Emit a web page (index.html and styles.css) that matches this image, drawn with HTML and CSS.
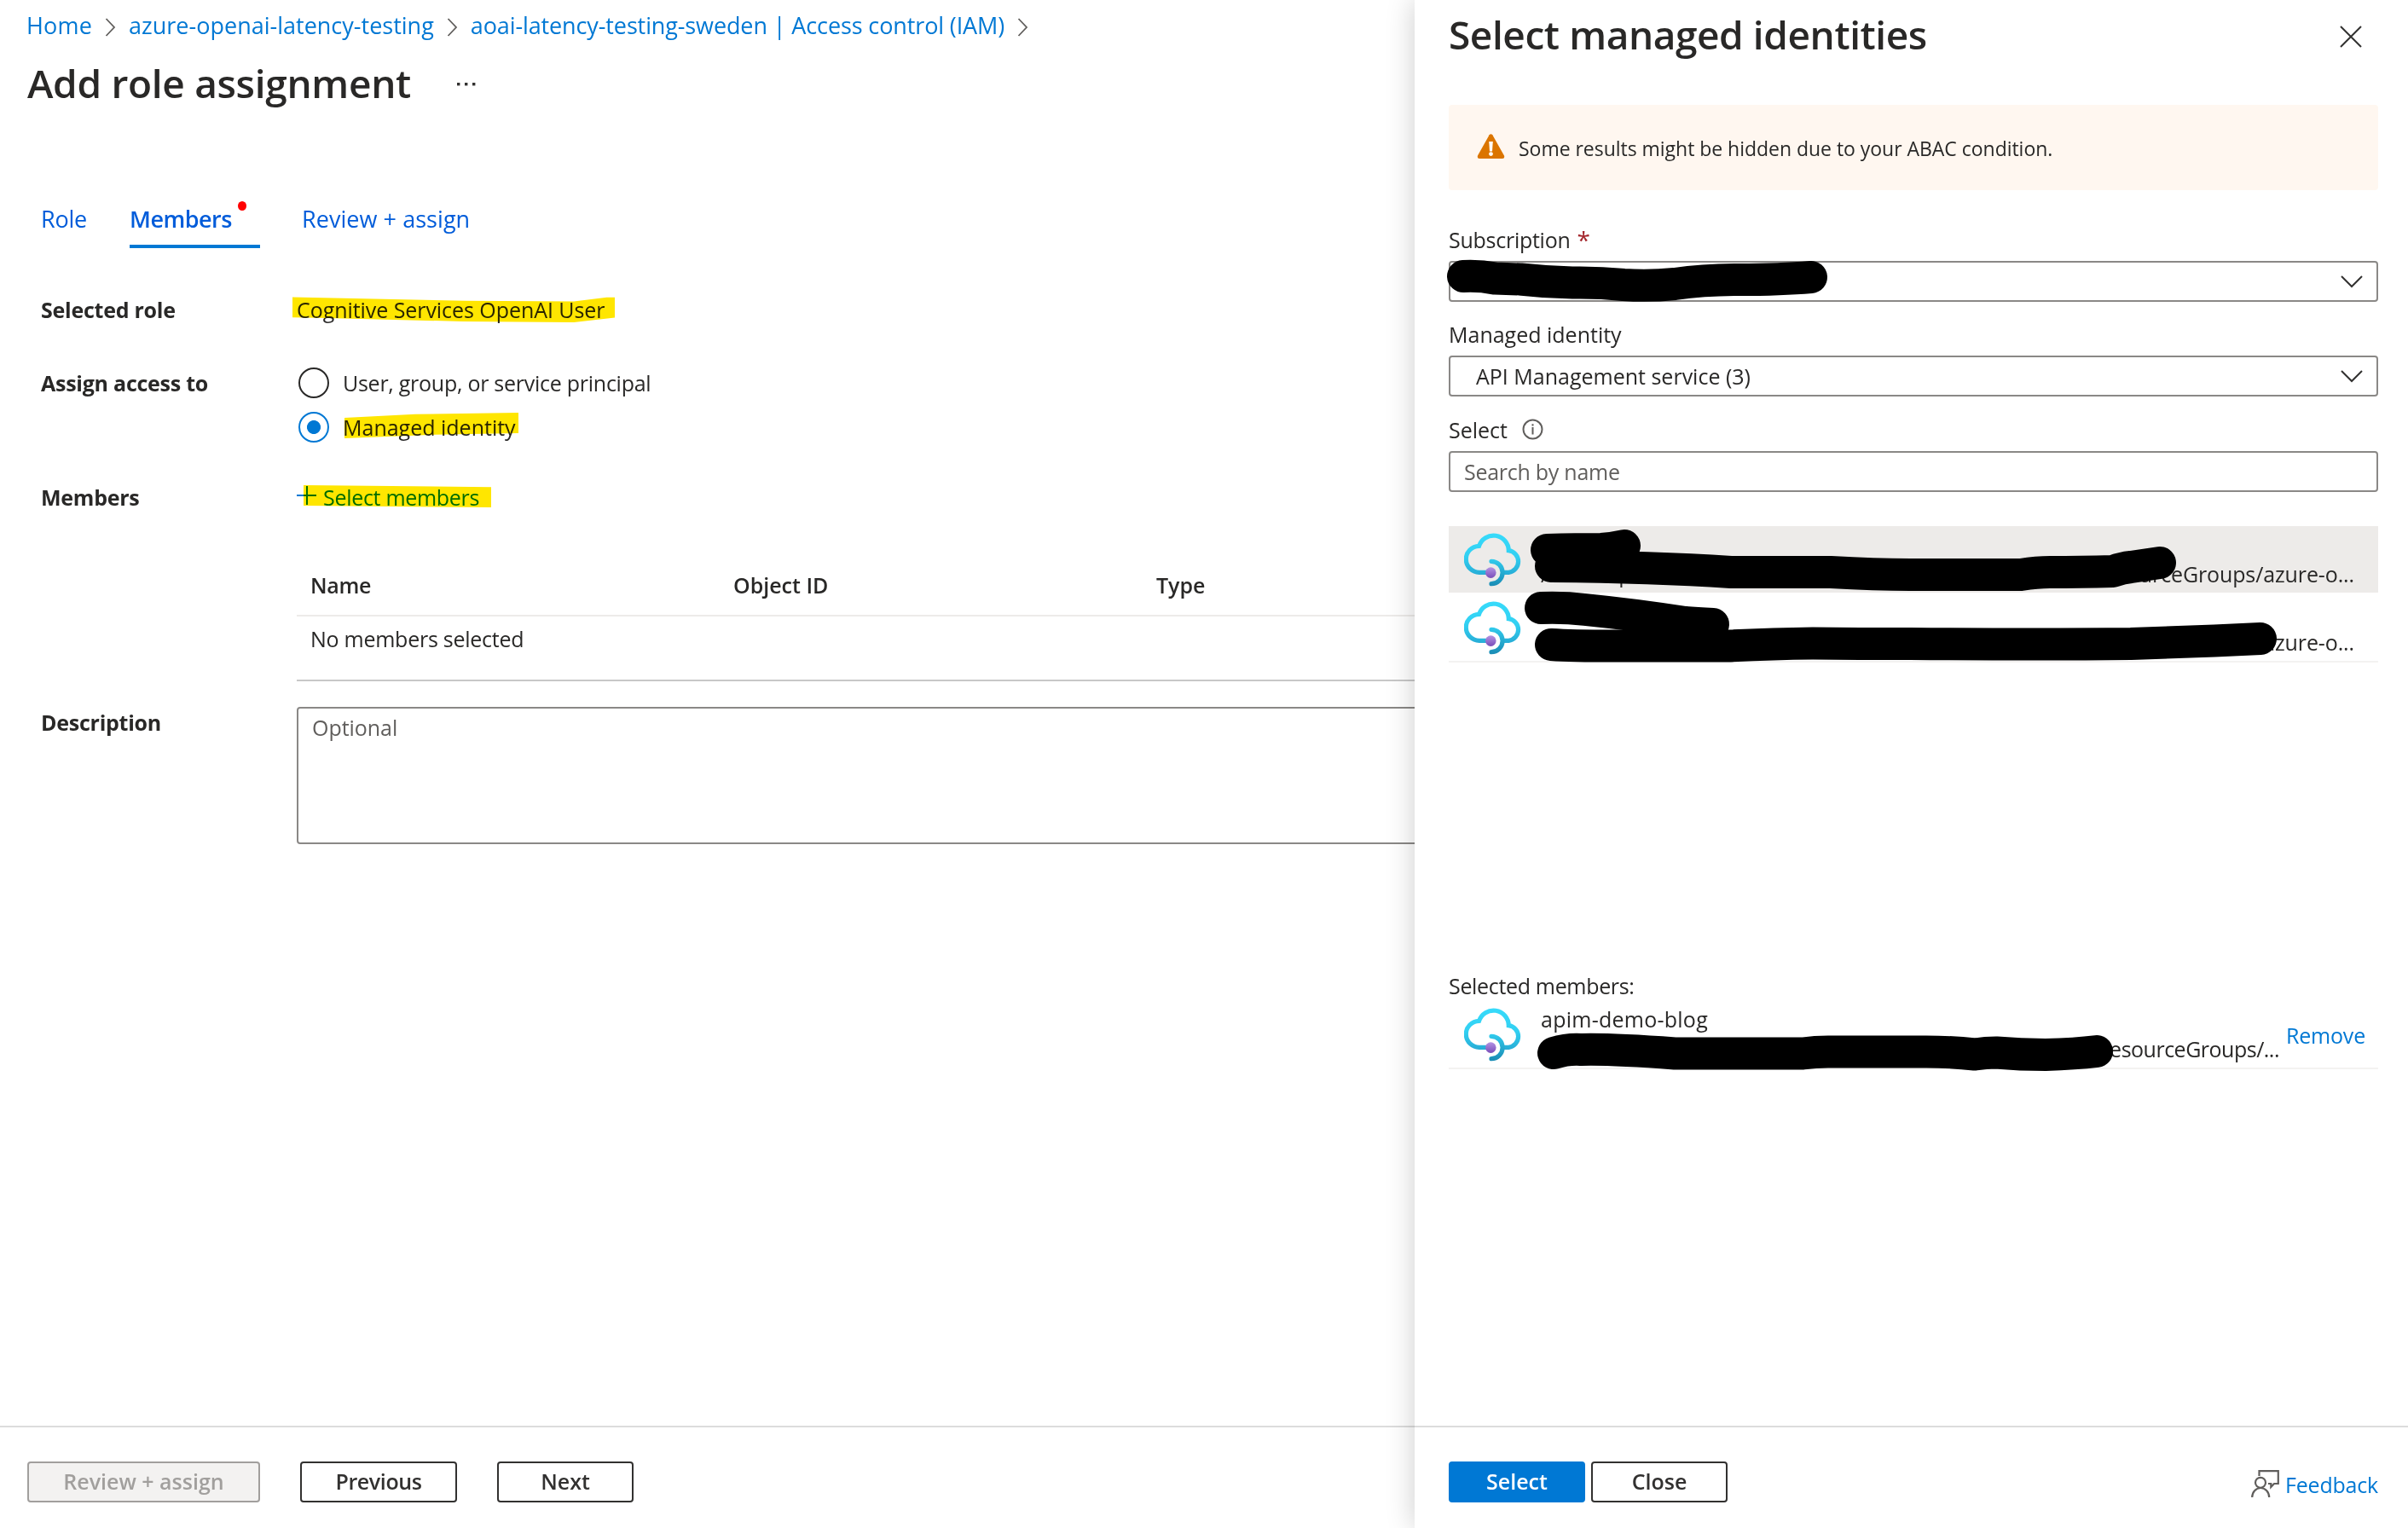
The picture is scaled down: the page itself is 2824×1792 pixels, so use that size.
FILE: index.html
```
<!DOCTYPE html>
<html lang="en">
<head>
  <meta charset="UTF-8">
  <title>Add role assignment</title>
  <link rel="stylesheet" href="styles.css">
</head>
<body>

<!-- shared icons -->
<svg class="sprite" width="0" height="0">
  <defs>
    <linearGradient id="cloudFill" gradientUnits="userSpaceOnUse" x1="0" y1="0" x2="0" y2="52">
      <stop offset="0" stop-color="#37dbfb"/>
      <stop offset="0.55" stop-color="#32d0f2"/>
      <stop offset="1" stop-color="#26a9d3"/>
    </linearGradient>
    <linearGradient id="hookFill" gradientUnits="userSpaceOnUse" x1="0" y1="32" x2="0" y2="64">
      <stop offset="0" stop-color="#31cbed"/>
      <stop offset="1" stop-color="#198ab3"/>
    </linearGradient>
    <linearGradient id="dotFill" x1="0" y1="0" x2="0" y2="1">
      <stop offset="0" stop-color="#b393e3"/>
      <stop offset="1" stop-color="#7a4db9"/>
    </linearGradient>
  </defs>
  <symbol id="apim" viewBox="0 0 68 64">
    <path d="M31 47.3H18.2A15.6 15.5 0 0 1 17.6 16.3A17.8 17.8 0 0 1 52.3 21.7A12.9 12.9 0 0 1 52.3 47.3H44" fill="none" stroke="url(#cloudFill)" stroke-width="5.2"/>
    <path d="M32 34.3A13.1 13.2 0 0 1 32 60.7" fill="none" stroke="url(#hookFill)" stroke-width="5.2" stroke-linecap="round"/>
    <circle cx="31.3" cy="47.6" r="6.3" fill="url(#dotFill)"/>
  </symbol>
  <symbol id="crumb" viewBox="0 0 13 22">
    <path d="M1.5 1L11 11L1.5 21" fill="none" stroke="#605e5c" stroke-width="1.8"/>
  </symbol>
  <symbol id="down" viewBox="0 0 26 16">
    <path d="M1 2L13 14L25 2" fill="none" stroke="#323130" stroke-width="2"/>
  </symbol>
</svg>

<div class="portal">

  <div class="main">
    <div class="breadcrumb">
      <a class="crumb-home">Home</a>
      <svg class="crumb-sep" width="13" height="22"><use href="#crumb"/></svg>
      <a class="crumb-group">azure-openai-latency-testing</a>
      <svg class="crumb-sep" width="13" height="22"><use href="#crumb"/></svg>
      <a class="crumb-iam">aoai-latency-testing-sweden | Access control (IAM)</a>
      <svg class="crumb-sep" width="13" height="22"><use href="#crumb"/></svg>
    </div>

    <div class="title-row">
      <h1>Add role assignment</h1>
      <svg class="more" width="22" height="4">
        <rect x="0" y="0" width="3.4" height="3.4"/><rect x="9" y="0" width="3.4" height="3.4"/><rect x="18" y="0" width="3.4" height="3.4"/>
      </svg>
    </div>

    <div class="tabs">
      <a class="tab tab-role">Role</a>
      <a class="tab active">Members<span class="dot"></span></a>
      <a class="tab tab-review">Review + assign</a>
    </div>

    <div class="form">
      <div class="row role-row">
        <label class="lbl">Selected role</label>
        <div class="value marked">
          Cognitive Services OpenAI User
          <svg class="marker" width="380" height="40"><path d="M-5 5.5L198.5 9.7L325 10.5L363.5 5.7H373V29.5L325 35L195 34L25 29.7L-5 29.3Z"/></svg>
        </div>
      </div>

      <div class="row access-row">
        <label class="lbl lbl-access">Assign access to</label>
        <div class="radios">
          <div class="radio"><span class="circle"></span><span class="tight">User, group, or service principal</span></div>
          <div class="radio on"><span class="circle"></span>
            <span class="marked">Managed identity
              <svg class="marker" width="210" height="40"><path d="M2 9L85 4.7L206 3V27L108 28.7L2 33Z"/></svg>
            </span>
          </div>
        </div>
      </div>

      <div class="row members-row">
        <label class="lbl">Members</label>
        <div class="value add marked">
          <svg class="plus" width="24" height="24"><path d="M0 12H23M12 1V23"/></svg>
          <a>Select members</a>
          <svg class="marker" width="240" height="40"><path d="M8 6L228 8.3V32L8 30Z"/></svg>
        </div>
      </div>

      <div class="table">
        <div class="tr th"><span class="col-name">Name</span><span class="col-id">Object ID</span><span>Type</span></div>
        <div class="tr td"><span class="tight">No members selected</span></div>
      </div>

      <div class="row desc-row">
        <label class="lbl lbl-desc">Description</label>
        <div class="textarea">Optional</div>
      </div>
    </div>

    <div class="footer">
      <button class="btn review" disabled>Review + assign</button>
      <button class="btn previous">Previous</button>
      <button class="btn next">Next</button>
    </div>
  </div>

  <div class="panel">
    <div class="panel-head">
      <h2>Select managed identities</h2>
      <svg class="close" width="26" height="26"><path d="M1 1L25 25M25 1L1 25"/></svg>
    </div>

    <div class="warning">
      <svg width="33" height="30" viewBox="0 0 33 30">
        <path d="M14.6 1.2Q16.5 -0.8 18.3 1.2L32 25.6Q33 28.6 30 29H3Q0 28.6 1 25.6Z" fill="#db7500"/>
        <path d="M14.2 9H18.8L18 20.5H15Z" fill="#fff"/>
        <circle cx="16.5" cy="23.6" r="2.4" fill="#fff"/>
      </svg>
      <span>Some results might be hidden due to your ABAC condition.</span>
    </div>

    <div class="field first"><span class="tight">Subscription</span> <span class="req">*</span></div>
    <div class="box select">
      <span></span>
      <svg width="26" height="16"><use href="#down"/></svg>
      <svg class="redact" width="470" height="48">
        <path d="M17 18Q36 17 54 20.5Q70 21 84 21.5Q115 25 145 25.5Q176 25 205 28Q235 30 265 27Q300 22 340 22Q390 22 425 19"/>
      </svg>
    </div>

    <div class="field"><span>Managed identity</span></div>
    <div class="box select">
      <span>API Management service (3)</span>
      <svg width="26" height="16"><use href="#down"/></svg>
    </div>

    <div class="field last"><span>Select</span>
      <svg class="info" width="25" height="25" viewBox="0 0 25 25">
        <circle cx="12.5" cy="12.5" r="11"/><path d="M12.5 10V18.5M12.5 6.2V8.4"/>
      </svg>
    </div>
    <div class="box search"><span class="tight">Search by name</span></div>

    <div class="list">
      <div class="item picked">
        <svg class="apim" width="68" height="64"><use href="#apim"/></svg>
        <div class="info-text">
          <div class="name"></div>
          <div class="path"><span>/subscriptions/</span><span>resourceGroups/azure-o...</span></div>
        </div>
        <svg class="redact" width="1090" height="80">
          <path d="M115 28Q150 27 179 27Q192 26 206 23"/>
          <path d="M120 47Q240 48 331 54Q400 54 448 54Q500 57 541 57H671Q690 54 705 54Q740 54 779 53Q790 49 800 48L834 43"/>
        </svg>
      </div>
      <div class="item">
        <svg class="apim" width="68" height="64"><use href="#apim"/></svg>
        <div class="info-text">
          <div class="name"></div>
          <div class="path"><span></span><span>resourceGroups/azure-o...</span></div>
        </div>
        <svg class="redact" width="1090" height="80">
          <path d="M108 16Q135 15 160 18Q220 24 277 33Q290 34 310 35"/>
          <path d="M120 59Q150 61 220 60.5H330Q380 58 427 57.5Q480 58 541 58Q700 59 800 58Q850 56 898 54.5L952 52"/>
        </svg>
      </div>
    </div>

    <div class="selected-title">Selected members:</div>
    <div class="item chosen">
      <svg class="apim" width="68" height="64"><use href="#apim"/></svg>
      <div class="info-text">
        <div class="name">apim-demo-blog</div>
        <div class="path"><span></span><span class="short">resourceGroups/...</span></div>
      </div>
      <a class="remove">Remove</a>
      <svg class="redact" width="1090" height="80">
        <path d="M123 61Q140 56 155 57Q190 56 265 61.5H415Q430 59.5 445 59.5H560Q590 59.5 617 62.5Q630 60.5 642 60.5Q670 63 700 63Q735 62 760 59"/>
      </svg>
    </div>

    <div class="footer panel-footer">
      <button class="btn primary">Select</button>
      <button class="btn cancel">Close</button>
      <a class="feedback">
        <svg width="33" height="33" viewBox="0 0 33 33">
          <path d="M9.5 7V1.2H31.8V16H27L23.3 20V16H20"/>
          <circle cx="11" cy="14.8" r="6"/>
          <path d="M1.2 32A10 11 0 0 1 21.2 32"/>
        </svg>
        <span>Feedback</span>
      </a>
    </div>
  </div>

</div>
</body>
</html>
```

FILE: styles.css
```
*, *:before, *:after {
  box-sizing: border-box;
}

body {
  margin: 0;
  background: #fff;
  color: #292827;
  font-family: 'Open Sans', 'Noto Sans', sans-serif;
  font-size: 25px;
}

.sprite {
  position: absolute;
}

svg {
  display: block;
  flex: none;
}

a {
  color: #0078d4;
  text-decoration: none;
}

h1, h2 {
  margin: 0;
  font-size: 46px;
  font-weight: 600;
  white-space: nowrap;
}

.tight {
  letter-spacing: -0.26px;
}

.portal {
  display: grid;
  grid-template-columns: 1659px 1fr;
  height: 1792px;
  overflow: hidden;
}

.main, .panel {
  display: flex;
  flex-direction: column;
  min-width: 0;
  height: 1792px;
}

/* left side */

.breadcrumb {
  display: flex;
  align-items: center;
  height: 60px;
  padding-left: 31px;
  font-size: 27px;
  line-height: 62px;
}

.crumb-sep {
  margin: 4px 15px 0 15px;
}

.crumb-home {
  letter-spacing: 0.2px;
}

.crumb-iam {
  letter-spacing: -0.12px;
}

.title-row {
  display: flex;
  height: 74px;
  padding-left: 32px;
}

h1 {
  line-height: 74px;
  letter-spacing: -0.3px;
}

.more {
  margin: 37px 0 0 54px;
  fill: #323130;
}

.tabs {
  display: flex;
  gap: 49px;
  margin-top: 91px;
  padding-left: 48px;
}

.tab {
  height: 66px;
  color: #015cda;
  font-size: 27px;
  line-height: 64px;
}

.tab-role {
  width: 55px;
  letter-spacing: -0.2px;
}

.tab-review {
  letter-spacing: 0.05px;
}

.tab.active {
  position: relative;
  width: 153px;
  border-bottom: 4px solid #0078d4;
  font-weight: 600;
  letter-spacing: -0.5px;
}

.dot {
  position: absolute;
  top: 11px;
  left: 127px;
  width: 10px;
  height: 11px;
  border-radius: 50%;
  background: #f00;
}

.form {
  flex: 1;
}

.row {
  display: grid;
  grid-template-columns: 300px 1fr;
  padding-left: 48px;
  line-height: 40px;
}

.lbl {
  font-weight: 700;
  letter-spacing: -0.25px;
}

.lbl-desc {
  line-height: 37px;
}

.role-row {
  margin-top: 52px;
}

.role-row .value {
  letter-spacing: -0.06px;
}

.access-row {
  margin-top: 46px;
}

.members-row {
  margin-top: 42px;
}

.desc-row {
  width: 1659px;
  margin-top: 30px;
  overflow: hidden;
}

/* highlighter strokes over the text */
.marked {
  position: relative;
}

.marker {
  position: absolute;
  top: 0;
  left: 0;
  overflow: visible;
  fill: #ffe600;
  mix-blend-mode: multiply;
}

.radios {
  display: grid;
  gap: 12px;
}

.radio {
  display: flex;
  align-items: center;
  gap: 16px;
  height: 40px;
  padding-left: 2px;
  white-space: nowrap;
}

.circle {
  width: 36px;
  height: 36px;
  border: 2px solid #292827;
  border-radius: 50%;
}

.radio.on .circle {
  border-color: #0078d4;
  background: radial-gradient(circle, #0078d4 7.6px, #fff 8.4px);
}

.add {
  display: flex;
  gap: 7px;
  letter-spacing: -0.3px;
}

.plus {
  margin-top: 6px;
  fill: none;
  stroke: #0078d4;
  stroke-width: 2;
}

.table {
  margin: 48px 0 0 348px;
  border-bottom: 2px solid #c8c8c8;
}

.tr {
  display: grid;
  grid-template-columns: 496px 496px 1fr;
  padding-left: 16px;
}

.th {
  height: 72px;
  border-bottom: 2px solid #edebe9;
  font-weight: 600;
  line-height: 70px;
}

.td {
  height: 74px;
  line-height: 53px;
}

.col-name {
  letter-spacing: -0.33px;
}

.textarea {
  width: 1600px;
  height: 161px;
  padding: 4px 16px;
  border: 2px solid #8a8886;
  border-radius: 4px;
  color: #605e5c;
  line-height: 36px;
  letter-spacing: -0.05px;
}

.footer {
  display: flex;
  align-items: flex-start;
  height: 120px;
  padding: 40px 0 0 32px;
  border-top: 2px solid #dcdcdc;
}

.btn {
  height: 48px;
  padding: 0 0 2px;
  border: 2px solid #323130;
  border-radius: 4px;
  background: #fff;
  color: #323130;
  font: 600 25px/42px 'Open Sans', 'Noto Sans', sans-serif;
}

.review {
  width: 273px;
  border-color: #a19f9d;
  background: #f3f2f1;
  color: #a19f9d;
}

.previous {
  width: 184px;
  margin-left: 47px;
  letter-spacing: -0.4px;
}

.next {
  width: 160px;
  margin-left: 47px;
}

/* right side panel */

.panel {
  position: relative;
  background: #fff;
  box-shadow: 0 0 32px rgba(0, 0, 0, 0.2);
}

.panel > * {
  margin-left: 40px;
  margin-right: 35px;
}

.panel-head {
  display: flex;
  justify-content: space-between;
  height: 82px;
  padding-right: 19px;
}

h2 {
  line-height: 81px;
  letter-spacing: -0.42px;
}

.close {
  margin-top: 30px;
  fill: none;
  stroke: #323130;
  stroke-width: 2;
}

.warning {
  display: flex;
  align-items: center;
  gap: 16px;
  height: 100px;
  margin-top: 41px;
  padding: 0 0 3px 33px;
  border-radius: 4px;
  background: #fff7f0;
  font-size: 23px;
  letter-spacing: -0.03px;
}

.warning span {
  padding-top: 5px;
}

.field {
  display: flex;
  align-items: flex-end;
  height: 63px;
  line-height: 50px;
}

.field.first {
  height: 83px;
}

.field.last {
  height: 64px;
}

.req {
  margin-left: 8px;
  color: #a4262c;
  font-size: 28px;
}

.info {
  margin: 0 0 13px 17px;
  fill: none;
  stroke: #605e5c;
  stroke-width: 2;
}

.box {
  position: relative;
  display: flex;
  align-items: center;
  justify-content: space-between;
  height: 48px;
  padding: 0 16px 0 30px;
  border: 2px solid #8a8886;
  border-radius: 4px;
}

.box.search {
  padding-left: 16px;
  padding-bottom: 1px;
  color: #605e5c;
}

/* black pen strokes hiding private ids */
.redact {
  position: absolute;
  top: 0;
  left: 0;
  overflow: visible;
  fill: none;
  stroke: #000;
  stroke-width: 38;
  stroke-linecap: round;
  stroke-linejoin: round;
}

.box .redact {
  top: -2px;
  left: -2px;
}

.list {
  height: 481px;
  margin-top: 40px;
}

.item {
  position: relative;
  display: flex;
  height: 80px;
  padding: 4px 28px 0 18px;
  border-bottom: 2px solid #f3f2f1;
}

.item.picked {
  border-color: #fff;
  background: #edebe9;
  background-clip: padding-box;
}

.apim {
  margin-top: 3px;
}

.info-text {
  flex: 1;
  margin-left: 22px;
}

.name, .path {
  height: 35px;
  line-height: 35px;
}

.name {
  letter-spacing: 0.25px;
}

.path {
  display: flex;
  justify-content: space-between;
  letter-spacing: -0.12px;
}

.short {
  letter-spacing: -0.5px;
}

.selected-title {
  height: 36px;
  margin-top: 40px;
  line-height: 36px;
  letter-spacing: -0.33px;
}

.chosen {
  padding-right: 15px;
}

.remove {
  margin-left: 8px;
  line-height: 73px;
  letter-spacing: -0.2px;
}

.panel .panel-footer {
  margin: auto 0 0;
  padding-left: 40px;
}

.panel-footer .btn {
  width: 160px;
}

.primary {
  border-color: #0078d4;
  background: #0078d4;
  color: #fff;
}

.cancel {
  margin-left: 7px;
}

.feedback {
  display: flex;
  gap: 7px;
  margin: 10px 35px 0 auto;
  letter-spacing: -0.2px;
  line-height: 34px;
}

.feedback svg {
  fill: none;
  stroke: #605e5c;
  stroke-width: 2.2;
}
```
